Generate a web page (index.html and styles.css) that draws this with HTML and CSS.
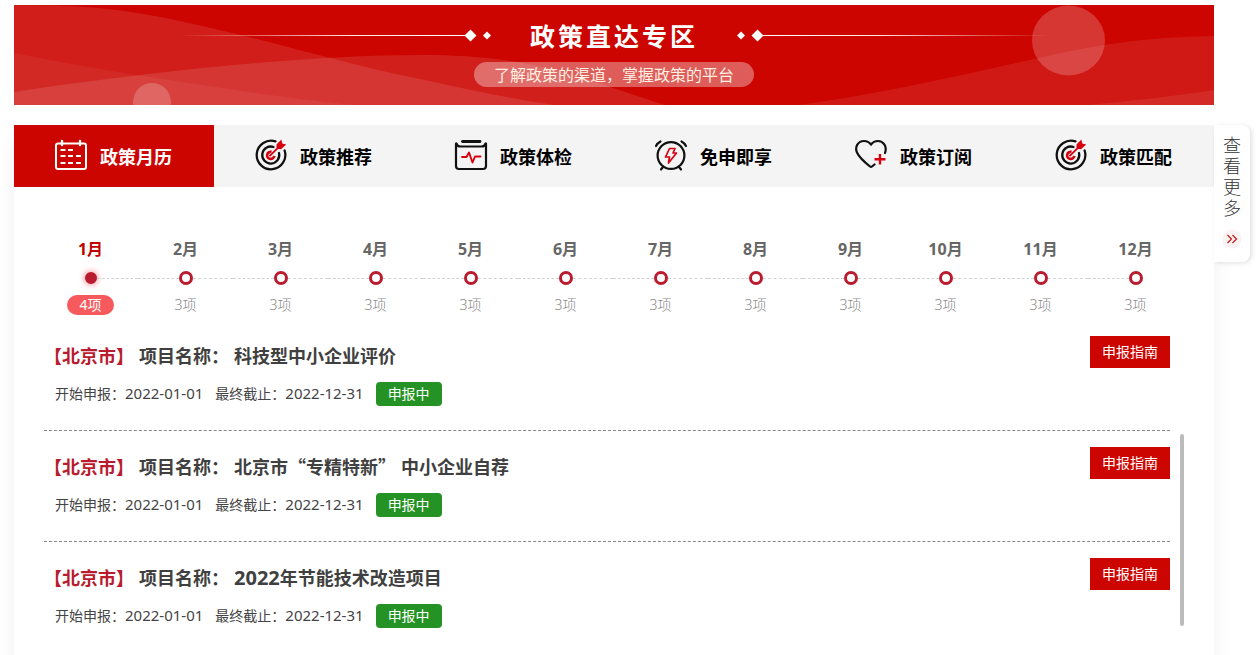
FILE: index.html
```html
<!DOCTYPE html>
<html lang="zh-CN">
<head>
<meta charset="utf-8">
<title>政策直达专区</title>
<link rel="stylesheet" href="styles.css">
</head>
<body>
<svg width="0" height="0" class="sprite" aria-hidden="true">
  <symbol id="icon-target" viewBox="0 0 34 34">
    <g fill="none" stroke="#111" stroke-width="2.3" stroke-linecap="round">
      <path d="M21.500 2.400A14.300 14.300 0 1 0 30.600 11.500"/>
      <path d="M19.500 8A8.500 8.500 0 1 0 25 14"/>
    </g>
    <path d="M17.500 12.800A3.600 3.600 0 1 0 20.300 16.800" fill="none" stroke="#d7000f" stroke-width="2.600"/>
    <path d="M15.500 17.200L26 6.800" stroke="#d7000f" stroke-width="1.800"/>
    <path d="M22.600 9.800L22.500 5.600L27.400 .6L28.200 4.400L32.200 5.400L27 10.200Z" fill="#d7000f"/>
  </symbol>
</svg>
<div class="page">
  <main class="main">
    <header class="banner">
      <svg class="banner-art" viewBox="0 0 1200 100" preserveAspectRatio="xMidYMid slice" aria-hidden="true">
        <defs>
          <linearGradient id="fade-left"><stop offset="0" stop-color="#ffe9d8" stop-opacity="0"/><stop offset=".6" stop-color="#ffe9d8"/><stop offset="1" stop-color="#fff"/></linearGradient>
          <linearGradient id="fade-right"><stop offset="0" stop-color="#fff"/><stop offset=".4" stop-color="#ffe9d8"/><stop offset="1" stop-color="#ffe9d8" stop-opacity="0"/></linearGradient>
        </defs>
        <g fill="#fff">
          <path fill-opacity=".1" d="M0 0C60 0 95 3 130 9C235 28 330 60 406 74C460 86 500 94 540 100H0Z"/>
          <path fill-opacity=".05" d="M0 48C45 57 90 65 130 71C200 82 270 93 340 100H0Z"/>
          <path fill-opacity=".11" d="M0 87C45 80 85 75 126 70C220 59 330 49 420 50C530 52 570 75 651 100H0Z"/>
          <path fill-opacity=".08" d="M785 100C860 90 940 72 1020 54C1080 40 1130 32 1200 31V100Z"/>
          <path fill-opacity=".08" d="M1071 100C1120 96 1160 91 1200 85V100Z"/>
          <ellipse fill-opacity=".2" cx="1054.500" cy="35.500" rx="36.500" ry="35"/>
          <circle fill-opacity=".2" cx="138" cy="97" r="19"/>
          <path d="M456.500 24.500l6 6l-6 6l-6-6ZM473 26.500l4 4l-4 4l-4-4ZM727 26.500l4 4l-4 4l-4-4ZM743.500 24.500l6 6l-6 6l-6-6Z"/>
        </g>
        <rect x="165" y="30" width="288" height="1" fill="url(#fade-left)"/>
        <rect x="747" y="30" width="290" height="1" fill="url(#fade-right)"/>
      </svg>
      <h1 class="banner-title">政策直达专区</h1>
      <p class="banner-sub">了解政策的渠道，掌握政策的平台</p>
    </header>

    <section class="panel">
      <nav class="tabs">
        <a class="tab tab-active" href="#calendar">
          <svg class="tab-icon" viewBox="0 0 34 34" aria-hidden="true"><g fill="none" stroke="#fff" stroke-width="2"><rect x="2" y="4.500" width="30" height="25.500" rx="2"/><path d="M8 2v4M26 2v4" stroke-linecap="round" stroke-width="2.400"/><path d="M6.500 11h5M14 11h5M6.500 17h5M14 17h5M22 17h5M6.500 24h5M14 24h5M22 24h5"/></g></svg>
          <span>政策月历</span></a>
        <a class="tab" href="#recommend"><svg class="tab-icon" aria-hidden="true"><use href="#icon-target"/></svg><span>政策推荐</span></a>
        <a class="tab" href="#check">
          <svg class="tab-icon" viewBox="0 0 34 34" aria-hidden="true"><g fill="none" stroke="#111" stroke-width="2.200" stroke-linecap="round" stroke-linejoin="round"><path d="M2 4.500V27Q2 30 5 30H29Q32 30 32 27V4.500"/><path stroke-width="2.800" d="M8.500 2.500H26"/><path d="M2.500 4.500Q3 7.500 6.500 7.500H27.500Q31 7.500 31.500 4.500"/><path stroke="#d7000f" stroke-width="1.900" d="M8 18H12.500L15 13.500L18.500 23.500L21 17.500H26.500"/></g></svg>
          <span>政策体检</span></a>
        <a class="tab" href="#enjoy">
          <svg class="tab-icon" viewBox="0 0 34 34" aria-hidden="true"><g fill="none" stroke="#111" stroke-width="2.200" stroke-linecap="round"><circle cx="17" cy="16.500" r="13.400"/><path d="M2 7Q3.500 4 6.500 2.500M27.500 2.500Q30.500 4 32 7M9 28L7 30.500M25 28L27 30.500"/><path stroke="#d7000f" stroke-width="1.700" stroke-linejoin="round" d="M15.500 9.500H21L19 14H22.500L14.500 24L15.500 18H11.500Z"/></g></svg>
          <span>免申即享</span></a>
        <a class="tab" href="#subscribe">
          <svg class="tab-icon" viewBox="0 0 34 34" aria-hidden="true"><g fill="none" stroke-linecap="round" stroke-linejoin="round"><path stroke="#111" stroke-width="2.200" d="M31 14C33.500 7 29 2 24 2C20.500 2 18.500 3.500 17 5.500C15.500 3.500 13.500 2 10 2C4 2 .5 8 3 13.500C5 18 11 23.500 16 27.500Q17 28.300 18 27.500L20.500 25.500"/><path stroke="#d7000f" stroke-width="2.400" stroke-linecap="butt" d="M26 15V25.500M20.500 20.200H31.500"/></g></svg>
          <span>政策订阅</span></a>
        <a class="tab" href="#match"><svg class="tab-icon" aria-hidden="true"><use href="#icon-target"/></svg><span>政策匹配</span></a>
      </nav>

      <ol class="months">
        <li class="month month-active"><b class="month-name">1月</b><span class="track"><i class="dot"></i></span><span class="count">4项</span></li>
        <li class="month"><b class="month-name">2月</b><span class="track"><i class="dot"></i></span><span class="count">3项</span></li>
        <li class="month"><b class="month-name">3月</b><span class="track"><i class="dot"></i></span><span class="count">3项</span></li>
        <li class="month"><b class="month-name">4月</b><span class="track"><i class="dot"></i></span><span class="count">3项</span></li>
        <li class="month"><b class="month-name">5月</b><span class="track"><i class="dot"></i></span><span class="count">3项</span></li>
        <li class="month"><b class="month-name">6月</b><span class="track"><i class="dot"></i></span><span class="count">3项</span></li>
        <li class="month"><b class="month-name">7月</b><span class="track"><i class="dot"></i></span><span class="count">3项</span></li>
        <li class="month"><b class="month-name">8月</b><span class="track"><i class="dot"></i></span><span class="count">3项</span></li>
        <li class="month"><b class="month-name">9月</b><span class="track"><i class="dot"></i></span><span class="count">3项</span></li>
        <li class="month"><b class="month-name">10月</b><span class="track"><i class="dot"></i></span><span class="count">3项</span></li>
        <li class="month"><b class="month-name">11月</b><span class="track"><i class="dot"></i></span><span class="count">3项</span></li>
        <li class="month"><b class="month-name">12月</b><span class="track"><i class="dot"></i></span><span class="count">3项</span></li>
      </ol>

      <div class="projects">
        <ul class="list">
          <li class="item">
            <div class="item-body">
              <h2 class="item-title"><span class="region">【北京市】</span><span>项目名称<span class="colon">：</span></span><span>科技型中小企业评价</span></h2>
              <p class="meta"><span>开始申报<span class="colon">：</span><time class="date">2022-01-01</time></span><span>最终截止<span class="colon">：</span><time class="date">2022-12-31</time></span><span class="status">申报中</span></p>
            </div>
            <a class="guide" href="#guide-1">申报指南</a>
          </li>
          <li class="item">
            <div class="item-body">
              <h2 class="item-title"><span class="region">【北京市】</span><span>项目名称<span class="colon">：</span></span><span>北京市“专精特新”</span><span>中小企业自荐</span></h2>
              <p class="meta"><span>开始申报<span class="colon">：</span><time class="date">2022-01-01</time></span><span>最终截止<span class="colon">：</span><time class="date">2022-12-31</time></span><span class="status">申报中</span></p>
            </div>
            <a class="guide" href="#guide-2">申报指南</a>
          </li>
          <li class="item">
            <div class="item-body">
              <h2 class="item-title"><span class="region">【北京市】</span><span>项目名称<span class="colon">：</span></span><span><span class="year">2022</span>年节能技术改造项目</span></h2>
              <p class="meta"><span>开始申报<span class="colon">：</span><time class="date">2022-01-01</time></span><span>最终截止<span class="colon">：</span><time class="date">2022-12-31</time></span><span class="status">申报中</span></p>
            </div>
            <a class="guide" href="#guide-3">申报指南</a>
          </li>
        </ul>
        <div class="rail"></div>
      </div>
    </section>
  </main>

  <a class="more" href="#more">
    <span class="more-text">查看更多</span>
    <svg class="more-icon" viewBox="0 0 20 20" aria-hidden="true"><circle cx="10" cy="10" r="9.500" fill="#faf1f1"/><path d="M5.500 6l4 4l-4 4M10.500 6l4 4l-4 4" fill="none" stroke="#cf1a1a" stroke-width="1.200"/></svg>
  </a>
</div>
</body>
</html>
```
FILE: styles.css
```css
* { box-sizing: border-box; }

body {
  margin: 0;
  overflow: hidden;
  background: #fff;
  color: #444;
  font-family: "Noto Sans", "Noto Sans CJK SC", sans-serif;
  font-size: 14px;
}

h1, h2, p, ol, ul { margin: 0; padding: 0; }
ol, ul { list-style: none; }
a { color: inherit; text-decoration: none; }

.sprite { position: absolute; }

.page {
  display: flex;
  align-items: flex-start;
  padding: 5px 10px 0 14px;
}

.main {
  flex: 1;
  display: flex;
  flex-direction: column;
  gap: 20px;
}

/* Banner */
.banner {
  position: relative;
  display: flex;
  flex-direction: column;
  align-items: center;
  gap: 11px;
  height: 100px;
  padding-top: 14px;
  background: #cc0500;
}

.banner-art {
  position: absolute;
  inset: 0;
  width: 100%;
  height: 100%;
}

.banner-title {
  position: relative;
  color: #fff;
  font-family: "Noto Sans CJK SC", sans-serif;
  font-size: 25px;
  line-height: 32px;
  letter-spacing: 3px;
}

.banner-sub {
  position: relative;
  padding: 0 20px;
  border-radius: 13px;
  background: rgba(255, 255, 255, .35);
  color: #fff0e4;
  font-family: "Noto Sans CJK SC", sans-serif;
  font-size: 16px;
  line-height: 25px;
}

/* Panel and tabs */
.panel {
  min-height: 560px;
  background: #fff;
  box-shadow: 0 16px 20px rgba(0, 0, 0, .06);
}

.tabs {
  display: grid;
  grid-template-columns: repeat(6, 1fr);
  background: #f4f4f4;
}

.tab {
  display: flex;
  align-items: center;
  gap: 12px;
  height: 62px;
  padding-bottom: 1px;
  padding-left: 40px;
  color: #000;
  font-size: 18px;
  font-weight: 700;
}

.tab-active { background: #cc0500; color: #fff; }
.tab-icon { width: 34px; height: 34px; }

/* Month timeline */
.months {
  display: grid;
  grid-template-columns: repeat(12, 1fr);
  padding: 50px 31px 0 29px;
}

.month {
  display: flex;
  flex-direction: column;
  align-items: center;
}

.month-name {
  color: #666;
  font-size: 16px;
  line-height: 24px;
}

.track {
  display: flex;
  align-items: center;
  align-self: stretch;
  height: 34px;
}

.track::before,
.track::after {
  content: "";
  flex: 1;
  border-top: 1px dashed #d2d2d2;
}

.month:first-child .track::before,
.month:last-child .track::after { border-color: transparent; }

.dot {
  width: 14px;
  height: 14px;
  border: 3px solid #b81c2e;
  border-radius: 50%;
}

.count {
  padding: 0 12px;
  border-radius: 10px;
  color: #888;
  font-size: 14px;
  font-weight: 300;
  line-height: 20px;
}

.month-active .month-name { color: #c00000; }
.month-active .dot {
  width: 12px;
  height: 12px;
  background: #b81c2e;
  box-shadow: 0 0 5px 2px rgba(250, 80, 90, .4);
}
.month-active .count { background: #f75a5c; color: #fff; font-weight: 400; }

/* Projects */
.projects {
  display: flex;
  gap: 10px;
  padding: 5px 30px 0;
}

.list { flex: 1; }

.item {
  display: flex;
  justify-content: space-between;
  align-items: flex-start;
  height: 111px;
  padding-top: 16px;
  border-bottom: 1px dashed #888;
}

.item:last-child { border-bottom: 0; }

.item-body {
  display: flex;
  flex-direction: column;
  gap: 7px;
}

.item-title {
  display: flex;
  align-items: center;
  gap: 5px;
  color: #404040;
  font-family: "Noto Sans CJK SC", sans-serif;
  font-size: 18px;
  line-height: 38px;
}

.region { color: #b81c2e; }
.colon { font-family: "Noto Sans CJK TC", sans-serif; }

.year {
  font-family: "Noto Sans", sans-serif;
  font-size: 20px;
  line-height: 1;
}

.meta {
  display: flex;
  align-items: center;
  gap: 12px;
  padding-left: 11px;
  line-height: 24px;
}

.date { font-size: 15px; }

.status {
  padding: 0 12px;
  border-radius: 4px;
  background: #259225;
  color: #fff;
}

.guide {
  padding: 0 12px;
  background: #cc0500;
  color: #fff;
  line-height: 32px;
}

.rail {
  width: 4px;
  height: 192px;
  margin-top: 114px;
  border-radius: 2px;
  background: #bbb;
}

/* Side link */
.more {
  display: flex;
  flex-direction: column;
  align-items: center;
  gap: 10px;
  width: 36px;
  margin-top: 120px;
  padding: 10px 8px 13px;
  border-radius: 0 8px 8px 0;
  background: #fff;
  box-shadow: 2px 1px 5px rgba(0, 0, 0, .12);
}

.more-text {
  width: 18px;
  color: #333;
  font-size: 18px;
  font-weight: 300;
  line-height: 21px;
}

.more-icon { width: 20px; height: 20px; }
```
